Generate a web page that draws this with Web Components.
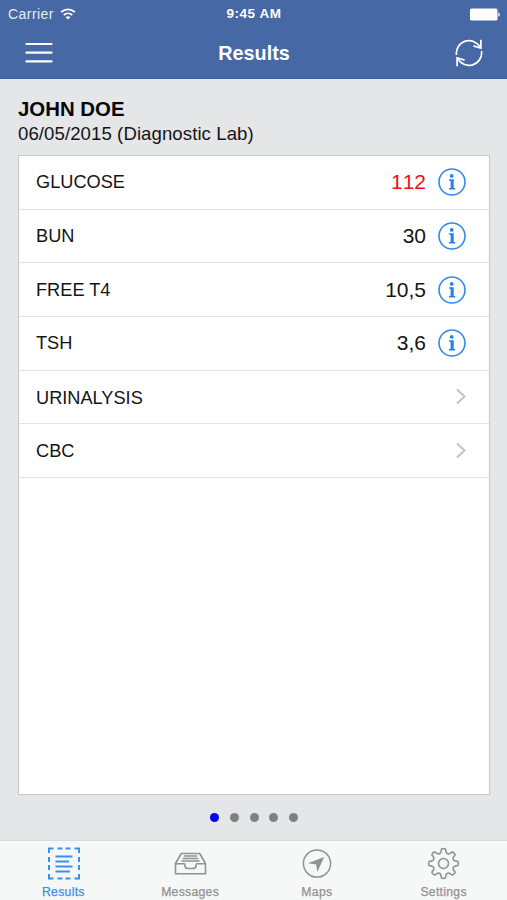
<!DOCTYPE html>
<html lang="en">
<head>
<meta charset="UTF-8">
<meta name="viewport" content="width=device-width, initial-scale=1">
<title>Results</title>
<style>
  html, body { height: 100%; margin: 0; overflow: hidden; }
  body { font-family: "Liberation Sans", Arial, sans-serif; color: #151515; background: #e4e6e8; }
</style>
</head>
<body>
<lab-app>
  <status-bar slot="top" carrier="Carrier" time="9:45 AM"></status-bar>
  <nav-bar slot="top">Results</nav-bar>
  <patient-header name="JOHN DOE">06/05/2015 (Diagnostic Lab)</patient-header>
  <result-list>
    <result-row value="112" alert>GLUCOSE</result-row>
    <result-row value="30">BUN</result-row>
    <result-row value="10,5">FREE T4</result-row>
    <result-row value="3,6">TSH</result-row>
    <result-row>URINALYSIS</result-row>
    <result-row>CBC</result-row>
  </result-list>
  <page-dots count="5" current="0"></page-dots>
  <tab-bar slot="bottom">
    <tab-item icon="results" active>Results</tab-item>
    <tab-item icon="messages">Messages</tab-item>
    <tab-item icon="maps">Maps</tab-item>
    <tab-item icon="settings">Settings</tab-item>
  </tab-bar>
</lab-app>

<script>
// Outline of the settings gear, eight teeth around the centre
function gearPath(cx, cy) {
  const point = (r, deg) => {
    const a = deg * Math.PI / 180;
    return `${(cx + r * Math.cos(a)).toFixed(2)} ${(cy + r * Math.sin(a)).toFixed(2)}`;
  };
  let d = '';
  for (let i = 0; i < 8; i++) {
    const a = i * 45 - 90;
    d += `${i ? 'L' : 'M'}${point(11.7, a - 13)} L${point(14.6, a - 8)} Q${point(15.3, a)} ${point(14.6, a + 8)} L${point(11.7, a + 13)} Q${point(9.6, a + 22.5)} ${point(11.7, a + 32)} `;
  }
  return d + 'Z';
}

const tabIcons = {
  results: `
    <g stroke-width="2">
      <path d="M2 6V1.500H6.500M10.500 1.500h5M18.500 1.500h5M27.500 1.500H32V6M32 10v5M32 18v5M32 27v4.500H27.500M23.500 31.500h-5M15.500 31.500h-5M6.500 31.500H2V27M2 23v-5M2 15v-5"/>
      <path d="M8.500 9.500h17M8.500 14.500h13.500M8.500 19.500h17M8.500 24.500h14.500"/>
    </g>`,
  messages: `
    <g stroke-width="1.600" stroke-linejoin="round">
      <path d="M1.500 16.500 7.300 6.500h18.400l5.800 10v10.300H1.500z"/>
      <path d="M1.500 16.700h8.700c.7 0 .7.600.7 1.600 0 2.300.9 3.200 3 3.200h5.200c2.100 0 3-.9 3-3.200 0-1 0-1.600.7-1.600h8.700"/>
      <path d="M9.800 9h13.400M8.700 11.500h15.600M7.500 14h18"/>
    </g>`,
  maps: `
    <circle cx="17" cy="16.500" r="13.600" stroke-width="1.500"/>
    <path d="M24.200 10 17.300 25 16.200 17.600 8 16.300z" fill="currentColor" stroke="none"/>`,
  settings: `
    <path d="${gearPath(16.5, 16.5)}" stroke-width="1.600" stroke-linejoin="round"/>
    <circle cx="16.500" cy="16.500" r="5" stroke-width="1.600"/>`
};

class LabApp extends HTMLElement {
  constructor() {
    super();
    this.attachShadow({ mode: 'open' }).innerHTML = `
      <style>
        :host { display: flex; flex-direction: column; height: 100vh; }
        header { background: #4668a4; height: 79px; box-sizing: border-box; border-bottom: 1px solid #3f609b; flex: none; }
        main { flex: 1; display: flex; flex-direction: column; padding: 0 17px 0 18px; min-height: 0; }
      </style>
      <header><slot name="top"></slot></header>
      <main><slot></slot></main>
      <slot name="bottom"></slot>
    `;
  }
}

class StatusBar extends HTMLElement {
  connectedCallback() {
    this.attachShadow({ mode: 'open' }).innerHTML = `
      <style>
        :host { display: grid; grid-template-columns: 1fr auto 1fr; align-items: center; height: 27px; padding: 0 7px 0 8px; color: #fff; font-size: 14px; line-height: 28px; }
        .left { display: flex; align-items: center; gap: 6px; color: #e6ecf6; letter-spacing: .45px; }
        .time { font-weight: bold; font-size: 13.500px; letter-spacing: .5px; }
        .battery { justify-self: end; }
        svg { display: block; }
      </style>
      <div class="left">
        <span>${this.getAttribute('carrier')}</span>
        <svg width="16" height="12" viewBox="0 0 16 12" fill="none" stroke="#fff" stroke-width="1.700">
          <path d="M1 4.200C5 .3 11 .3 15 4.200M3.700 7c2.500-2.300 6.100-2.300 8.600 0"/>
          <path d="M8 11.600 5.600 9.200c1.400-1.200 3.400-1.200 4.800 0z" fill="#fff" stroke="none"/>
        </svg>
      </div>
      <span class="time">${this.getAttribute('time')}</span>
      <svg class="battery" width="30" height="13" viewBox="0 0 30 13" fill="#fff">
        <rect x="0" y="0.500" width="27.500" height="12" rx="1.500"/>
        <path d="M28.300 4.500c2 .6 2 3.400 0 4z"/>
      </svg>
    `;
  }
}

class NavBar extends HTMLElement {
  constructor() {
    super();
    this.attachShadow({ mode: 'open' }).innerHTML = `
      <style>
        :host { display: grid; grid-template-columns: 1fr auto 1fr; align-items: center; height: 51px; padding: 0 24px 0 25px; color: #fff; }
        .title { font-size: 19.800px; font-weight: bold; padding-top: 1px; }
        .refresh { justify-self: end; }
        svg { display: block; fill: none; stroke: #fff; }
      </style>
      <svg width="28" height="22" viewBox="0 0 28 22" stroke-width="2.200" stroke-linecap="round">
        <path d="M1.500 2h25M1.500 10.700h25M1.500 19.400h25"/>
      </svg>
      <span class="title"><slot></slot></span>
      <svg class="refresh" width="28" height="28" viewBox="0 0 28 28" stroke-width="1.700">
        <path d="M1.500 16A12.600 12.600 0 0 1 25.300 8.700M26.500 12A12.600 12.600 0 0 1 2.700 19.300"/>
        <path d="M25.900.800V9.200L18.400 6.900M2.100 27.200v-8.400l7.500 2.300"/>
      </svg>
    `;
  }
}

class PatientHeader extends HTMLElement {
  connectedCallback() {
    this.attachShadow({ mode: 'open' }).innerHTML = `
      <style>
        :host { display: block; height: 59px; padding-top: 17px; white-space: nowrap; }
        .name { font-size: 20.400px; font-weight: bold; line-height: 26px; color: #080808; }
        .info { font-size: 18.600px; line-height: 23px; letter-spacing: .08px; }
      </style>
      <div class="name">${this.getAttribute('name')}</div>
      <div class="info"><slot></slot></div>
    `;
  }
}

class ResultList extends HTMLElement {
  constructor() {
    super();
    this.attachShadow({ mode: 'open' }).innerHTML = `
      <style>
        :host { display: block; box-sizing: border-box; height: 640px; flex: none; background: #fff; border: 1.500px solid #c5c7c9; }
      </style>
      <slot></slot>
    `;
  }
}

class ResultRow extends HTMLElement {
  connectedCallback() {
    const value = this.getAttribute('value');
    const color = this.hasAttribute('alert') ? '#f41116' : '#151515';

    this.attachShadow({ mode: 'open' }).innerHTML = `
      <style>
        :host { display: flex; align-items: center; box-sizing: border-box; height: 53.700px; padding: 0 ${value ? 23 : 22}px 0 17px; border-bottom: 1px solid #e4e4e5; }
        .label { flex: 1; font-size: 18.200px; padding-top: ${value ? 1 : 2}px; }
        .value { font-size: 21px; color: ${color}; margin-right: 12px; font-kerning: none; }
        svg { display: block; }
      </style>
      <span class="label"><slot></slot></span>
      ${value ? this.infoPart(value) : this.chevron()}
    `;
  }

  infoPart(value) {
    return `
      <span class="value">${value}</span>
      <svg width="28" height="28" viewBox="0 0 28 28">
        <circle cx="14" cy="14" r="13" fill="none" stroke="#3389ec" stroke-width="1.600"/>
        <circle cx="13.700" cy="7.900" r="1.900" fill="#2481ee"/>
        <path d="M11 11.200h4.700v8.700h1.500v1.500H11v-1.500h1.600v-7.200H11z" fill="#2481ee"/>
      </svg>`;
  }

  chevron() {
    return `
      <svg width="12" height="18" viewBox="0 0 12 18">
        <path d="M2 1.500 9.500 8.500 2 15.500" fill="none" stroke="#c3c3c6" stroke-width="2"/>
      </svg>`;
  }
}

class PageDots extends HTMLElement {
  connectedCallback() {
    const count = Number(this.getAttribute('count'));
    const current = Number(this.getAttribute('current'));

    this.attachShadow({ mode: 'open' }).innerHTML = `
      <style>
        :host { display: flex; flex: 1; align-items: center; justify-content: center; gap: 10.600px; }
        i { width: 9px; height: 9px; border-radius: 50%; background: #7f8081; }
        i.on { background: #0202f5; }
      </style>
      ${Array.from({ length: count }, (_, i) => `<i class="${i === current ? 'on' : ''}"></i>`).join('')}
    `;
  }
}

class TabBar extends HTMLElement {
  constructor() {
    super();
    this.attachShadow({ mode: 'open' }).innerHTML = `
      <style>
        :host { display: grid; grid-template-columns: repeat(4, 1fr); flex: none; box-sizing: border-box; height: 60px; border-top: 1px solid #d8dadb; background: #f6f7f7; }
      </style>
      <slot></slot>
    `;
  }
}

class TabItem extends HTMLElement {
  connectedCallback() {
    const color = this.hasAttribute('active') ? '#3a8fea' : '#929292';

    this.attachShadow({ mode: 'open' }).innerHTML = `
      <style>
        :host { display: flex; flex-direction: column; align-items: center; padding-top: 6px; color: ${color}; }
        svg { display: block; fill: none; stroke: currentColor; }
        span { margin-top: 4px; font-size: 12.200px; line-height: 16px; letter-spacing: .3px; -webkit-text-stroke: .25px; }
      </style>
      <svg width="33" height="33" viewBox="0 0 33 33">${tabIcons[this.getAttribute('icon')]}</svg>
      <span><slot></slot></span>
    `;
  }
}

customElements.define('lab-app', LabApp);
customElements.define('status-bar', StatusBar);
customElements.define('nav-bar', NavBar);
customElements.define('patient-header', PatientHeader);
customElements.define('result-list', ResultList);
customElements.define('result-row', ResultRow);
customElements.define('page-dots', PageDots);
customElements.define('tab-bar', TabBar);
customElements.define('tab-item', TabItem);
</script>
</body>
</html>
